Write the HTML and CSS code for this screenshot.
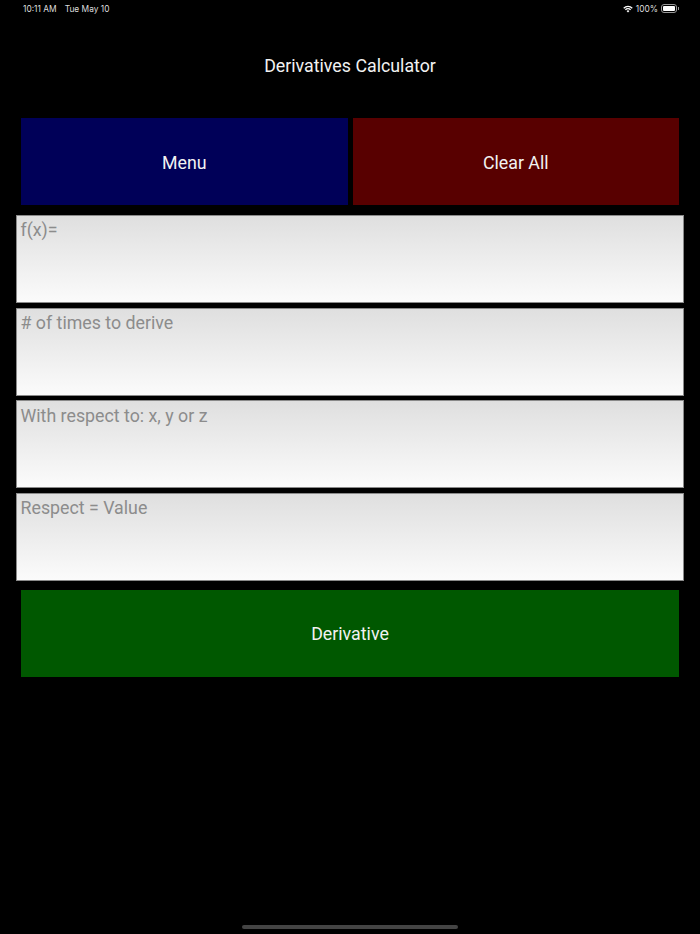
FILE: index.html
```html
<!DOCTYPE html>
<html lang="en">
<head>
  <meta charset="UTF-8" />
  <meta name="viewport" content="width=device-width, initial-scale=1.0"/>
  <title>Derivatives Calculator</title>
  <link rel="stylesheet" href="styles.css">
</head>
<body>
  <div class="status-bar">
    <div class="status-time">
      <span>10:11 AM</span>
      <span>Tue May 10</span>
    </div>
    <div class="status-icons">
      <svg class="wifi" width="10" height="8" viewBox="0 0 11 8">
        <path d="M0.3 2.6 A7.4 7.4 0 0 1 10.7 2.6 L9.7 3.6 A6 6 0 0 0 1.3 3.6 Z" fill="#fff"/>
        <path d="M2.1 4.4 A4.8 4.8 0 0 1 8.9 4.4 L7.9 5.4 A3.4 3.4 0 0 0 3.1 5.4 Z" fill="#fff"/>
        <path d="M3.9 6.2 A2.3 2.3 0 0 1 7.1 6.2 L5.5 7.9 Z" fill="#fff"/>
      </svg>
      <span>100%</span>
      <div class="battery"><div class="battery-fill"></div></div>
      <div class="battery-cap"></div>
    </div>
  </div>

  <h1>Derivatives Calculator</h1>

  <div class="button-row">
    <button class="btn btn-menu">Menu</button>
    <button class="btn btn-clear">Clear All</button>
  </div>

  <div class="fields">
    <textarea class="field" placeholder="f(x)="></textarea>
    <textarea class="field" placeholder="# of times to derive"></textarea>
    <textarea class="field" placeholder="With respect to: x, y or z"></textarea>
    <textarea class="field" placeholder="Respect = Value"></textarea>
  </div>

  <button class="btn btn-derive">Derivative</button>

  <div class="home-bar"></div>
</body>
</html>
```

FILE: styles.css
```css
* {
  box-sizing: border-box;
}

html, body {
  height: 100%;
}

body {
  margin: 0;
  background-color: #000;
  color: #fff;
  font-family: Roboto, "Liberation Sans", sans-serif;
  overflow: hidden;
}

.status-bar {
  display: flex;
  justify-content: space-between;
  align-items: center;
  height: 17px;
  padding: 0 21px 0 23px;
  font-family: Inter, "Liberation Sans", sans-serif;
  font-size: 8.4px;
  color: #ddd;
}

.status-time {
  display: flex;
  gap: 8px;
}

.status-icons {
  display: flex;
  align-items: center;
  gap: 3px;
}

.battery {
  width: 16px;
  height: 9px;
  padding: 1px;
  border: 1px solid #999;
  border-radius: 3px;
}

.battery-fill {
  height: 100%;
  background-color: #fff;
  border-radius: 1px;
}

.battery-cap {
  width: 1px;
  height: 3px;
  margin-left: -2px;
  background-color: #999;
}

h1 {
  margin: 0;
  padding-top: 38px;
  height: 101px;
  font-size: 17.8px;
  line-height: 21px;
  font-weight: 400;
  text-align: center;
  color: #f2f2f2;
}

.button-row {
  display: flex;
  gap: 5px;
  padding: 0 21px;
}

.btn {
  display: block;
  height: 87px;
  border: 0;
  padding: 2px 0 0;
  color: #f2f2f2;
  font-family: Roboto, "Liberation Sans", sans-serif;
  font-size: 17.8px;
}

.button-row .btn {
  flex: 1;
}

.btn-menu {
  background-color: #000058;
}

.btn-clear {
  background-color: #580000;
}

.btn-derive {
  width: 658px;
  margin: 9px 0 0 21px;
  padding: 0;
  background-color: #005800;
}

.fields {
  display: flex;
  flex-direction: column;
  gap: 4.6px;
  margin-top: 10px;
  padding: 0 16px;
}

.field {
  display: block;
  width: 100%;
  height: 88px;
  padding: 3.45px 3.5px;
  border: 1px solid #8a8a8a;
  border-radius: 0;
  resize: none;
  outline: none;
  background: linear-gradient(#dfdfdf, #fbfbfb);
  font-family: Roboto, "Liberation Sans", sans-serif;
  font-size: 17.8px;
  line-height: 22px;
}

.field::placeholder {
  color: #8c8c8c;
  opacity: 1;
}

/* sits over the bottom of the screen */
.home-bar {
  position: absolute;
  left: 242px;
  top: 925px;
  width: 216px;
  height: 4px;
  border-radius: 2px;
  background-color: #444;
}
```
